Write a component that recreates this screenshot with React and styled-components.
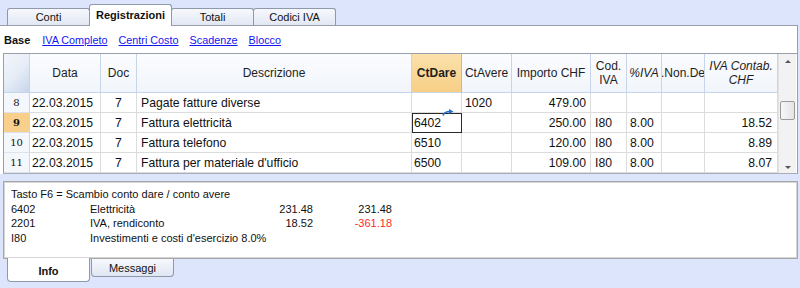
import React from 'react'
import styled, { createGlobalStyle, css } from 'styled-components'

const GlobalStyle = createGlobalStyle`
  body {
    margin: 0;
    font-family: "Liberation Sans", Arial, sans-serif;
  }
`

const Screen = styled.div`
  width: 800px;
  height: 288px;
  overflow: hidden;
  background: #dce5fb;
  display: flex;
  flex-direction: column;
  color: #111;
`

const TopTabs = styled.div`
  display: flex;
  align-items: flex-end;
  height: 25px;
  padding-left: 7px;
  position: relative;
  z-index: 1;
`

const tabBase = css`
  box-sizing: border-box;
  width: 83px;
  display: flex;
  align-items: center;
  justify-content: center;
  font-size: 11px;
  border: 1px solid #8e99ab;
`

const TopTab = styled.div`
  ${tabBase}
  border-bottom: none;
  border-radius: 3px 3px 0 0;
  height: ${p => (p.$active ? '22px' : '17px')};
  margin-bottom: ${p => (p.$active ? '-1px' : '0')};
  background: ${p => (p.$active ? '#fff' : 'linear-gradient(#f6f8fc, #e1e7f3)')};
  font-weight: ${p => (p.$active ? 'bold' : 'normal')};
  padding-bottom: ${p => (p.$active ? '2px' : '0')};
  & + & {
    margin-left: -1px;
  }
`

const Panel = styled.div`
  background: #fff;
  border-top: 1px solid #9aa0ab;
  border-right: 1px solid #9aa0ab;
  margin-right: 2px;
  display: flex;
  flex-direction: column;
`

const SubNav = styled.div`
  height: 27px;
  display: flex;
  align-items: center;
  gap: 11px;
  padding-left: 4px;
  font-size: 10.8px;
`

const NavLabel = styled.span`
  font-weight: bold;
  font-size: 11px;
  margin-right: 1px;
`

const NavLink = styled.a`
  color: #1515f0;
  text-decoration: underline;
`

const TableFrame = styled.div`
  display: flex;
  margin-left: 3px;
  border: 1px solid #9aa0ab;
  border-right: none;
  border-bottom: 1px solid #a9adb5;
`

const Grid = styled.div`
  display: grid;
  grid-template-columns: 26px 71px 36px 275px 50px 50px 79px 36px 35px 43px 73px;
  grid-template-rows: 39px repeat(4, 20px);
`

const HeadCell = styled.div`
  box-sizing: border-box;
  display: flex;
  align-items: center;
  justify-content: center;
  text-align: center;
  font-size: 12px;
  line-height: 14px;
  color: #1e1e1e;
  white-space: nowrap;
  overflow: hidden;
  border-right: 1px solid #c6d5ea;
  border-bottom: 1px solid #c6d5ea;
  background: linear-gradient(#fbfcfe, #f1f5fb);
  font-style: ${p => (p.$italic ? 'italic' : 'normal')};
  ${p =>
    p.$current &&
    css`
      background: linear-gradient(#fbe1ab, #f7cf86);
      border-right-color: #eeb062;
      font-weight: bold;
    `}
  ${p =>
    p.$corner &&
    css`
      background: linear-gradient(135deg, #f3f6fb 0%, #e6edf7 50%, #c8d6ea 100%);
    `}
`

const RowNum = styled.div`
  box-sizing: border-box;
  display: flex;
  align-items: center;
  justify-content: center;
  font-family: "DejaVu Serif", serif;
  font-size: 10px;
  border-right: 1px solid #c6d5ea;
  border-bottom: 1px solid #dde3ec;
  background: ${p => (p.$active ? '#f8d08c' : '#f4f7fc')};
  font-weight: ${p => (p.$active ? 'bold' : 'normal')};
`

const Cell = styled.div`
  box-sizing: border-box;
  position: relative;
  display: flex;
  align-items: center;
  font-size: 12.2px;
  white-space: nowrap;
  border-right: 1px solid #dcdcdc;
  border-bottom: 1px solid #dcdcdc;
  justify-content: ${p =>
    p.$align === 'right' ? 'flex-end' : p.$align === 'center' ? 'center' : 'flex-start'};
  padding: 0 ${p => p.$pr ?? 3}px 0 ${p => p.$pl ?? 3}px;
  ${p =>
    p.$selected &&
    css`
      outline: 1px solid #2a2a2a;
      outline-offset: -1px;
    `}
`

const JumpArrow = styled.svg`
  position: absolute;
  top: -4px;
  right: 7px;
`

const Scrollbar = styled.div`
  width: 18px;
  background: #f2f2f2;
  border-left: 1px solid #e2e2e2;
  display: flex;
  flex-direction: column;
  align-items: center;
  padding: 6px 0 4px;
  box-sizing: border-box;
`

const Arrow = styled.div`
  width: 0;
  height: 0;
  border-left: 3px solid transparent;
  border-right: 3px solid transparent;
  ${p =>
    p.$down
      ? css`
          border-top: 3px solid #555;
        `
      : css`
          border-bottom: 3px solid #555;
        `}
`

const Thumb = styled.div`
  width: 15px;
  height: 19px;
  box-sizing: border-box;
  margin-top: 38px;
  border: 1px solid #9b9b9b;
  border-radius: 2px;
  background: linear-gradient(90deg, #f7f7f7, #e4e4e4);
`

const Spacer = styled.div`
  flex: 1;
`

const InfoPanel = styled.div`
  box-sizing: border-box;
  margin: 7px 2px 0 3px;
  height: 78px;
  background: #fff;
  border: 1px solid #a7a7a7;
  box-shadow: inset 0 0 0 1px #d4d4d4;
  padding: 5px 0 0 7px;
  font-size: 11px;
  line-height: 14.6px;
  position: relative;
  z-index: 0;
`

const InfoGrid = styled.div`
  display: grid;
  grid-template-columns: 79px 160px 63px 79px;
`

const InfoValue = styled.div`
  text-align: ${p => (p.$right ? 'right' : 'left')};
  color: ${p => (p.$negative ? '#ff2a2a' : 'inherit')};
  white-space: nowrap;
  grid-column: ${p => p.$span || 'auto'};
`

const BottomTabs = styled.div`
  display: flex;
  align-items: flex-start;
  padding-left: 7px;
  position: relative;
  z-index: 1;
`

const BottomTab = styled.div`
  ${tabBase}
  border-top: none;
  border-radius: 0 0 4px 4px;
  margin-top: ${p => (p.$active ? '-1px' : '0')};
  height: ${p => (p.$active ? '24px' : '18px')};
  padding-top: ${p => (p.$active ? '3px' : '0')};
  background: ${p => (p.$active ? '#fff' : 'linear-gradient(#f6f8fc, #e0e6f2)')};
  font-weight: ${p => (p.$active ? 'bold' : 'normal')};
  & + & {
    margin-left: 1px;
  }
`

const headers = [
  { label: '', corner: true },
  { label: 'Data' },
  { label: 'Doc' },
  { label: 'Descrizione' },
  { label: 'CtDare', current: true },
  { label: 'CtAvere' },
  { label: 'Importo CHF' },
  { label: ['Cod.', 'IVA'] },
  { label: '%IVA', italic: true },
  { label: '.Non.De' },
  { label: ['IVA Contab.', 'CHF'], italic: true },
]

const rows = [
  { n: 8, desc: 'Pagate fatture diverse', dare: '', avere: '1020', imp: '479.00', cod: '', pct: '', iva: '' },
  { n: 9, desc: 'Fattura elettricità', dare: '6402', avere: '', imp: '250.00', cod: 'I80', pct: '8.00', iva: '18.52', active: true },
  { n: 10, desc: 'Fattura telefono', dare: '6510', avere: '', imp: '120.00', cod: 'I80', pct: '8.00', iva: '8.89' },
  { n: 11, desc: "Fattura per materiale d'ufficio", dare: '6500', avere: '', imp: '109.00', cod: 'I80', pct: '8.00', iva: '8.07' },
]

const HeaderLabel = ({ label }) =>
  Array.isArray(label) ? (
    <span>
      {label[0]}
      <br />
      {label[1]}
    </span>
  ) : (
    label
  )

export default function App() {
  return (
    <Screen>
      <GlobalStyle />
      <TopTabs>
        <TopTab>Conti</TopTab>
        <TopTab $active>Registrazioni</TopTab>
        <TopTab>Totali</TopTab>
        <TopTab>Codici IVA</TopTab>
      </TopTabs>
      <Panel>
        <SubNav>
          <NavLabel>Base</NavLabel>
          <NavLink>IVA Completo</NavLink>
          <NavLink>Centri Costo</NavLink>
          <NavLink>Scadenze</NavLink>
          <NavLink>Blocco</NavLink>
        </SubNav>
        <TableFrame>
          <Grid>
            {headers.map((h, i) => (
              <HeadCell key={i} $corner={h.corner} $current={h.current} $italic={h.italic}>
                <HeaderLabel label={h.label} />
              </HeadCell>
            ))}
            {rows.map(r => (
              <React.Fragment key={r.n}>
                <RowNum $active={r.active}>{r.n}</RowNum>
                <Cell $pl={2}>22.03.2015</Cell>
                <Cell $align="center">7</Cell>
                <Cell $pl={4}>{r.desc}</Cell>
                <Cell $pl={2} $selected={r.active}>
                  {r.dare}
                  {r.active && (
                    <JumpArrow width="12" height="7" viewBox="0 0 12 7">
                      <path d="M1 6.5 C2 3.5 4.5 2.5 8 2.5" fill="none" stroke="#1d6fd6" strokeWidth="1.6" />
                      <path d="M7 0 L11.5 2.5 L7 5 Z" fill="#1d6fd6" />
                    </JumpArrow>
                  )}
                </Cell>
                <Cell $pl={3}>{r.avere}</Cell>
                <Cell $align="right" $pr={4}>{r.imp}</Cell>
                <Cell $pl={4}>{r.cod}</Cell>
                <Cell $pl={3}>{r.pct}</Cell>
                <Cell />
                <Cell $align="right" $pr={5}>{r.iva}</Cell>
              </React.Fragment>
            ))}
          </Grid>
          <Scrollbar>
            <Arrow />
            <Thumb />
            <Spacer />
            <Arrow $down />
          </Scrollbar>
        </TableFrame>
      </Panel>
      <InfoPanel>
        <InfoGrid>
          <InfoValue $span="1 / -1">Tasto F6 = Scambio conto dare / conto avere</InfoValue>
          <InfoValue>6402</InfoValue>
          <InfoValue>Elettricità</InfoValue>
          <InfoValue $right>231.48</InfoValue>
          <InfoValue $right>231.48</InfoValue>
          <InfoValue>2201</InfoValue>
          <InfoValue>IVA, rendiconto</InfoValue>
          <InfoValue $right>18.52</InfoValue>
          <InfoValue $right $negative>-361.18</InfoValue>
          <InfoValue>I80</InfoValue>
          <InfoValue $span="2 / -1">Investimenti e costi d'esercizio 8.0%</InfoValue>
        </InfoGrid>
      </InfoPanel>
      <BottomTabs>
        <BottomTab $active>Info</BottomTab>
        <BottomTab>Messaggi</BottomTab>
      </BottomTabs>
    </Screen>
  )
}
